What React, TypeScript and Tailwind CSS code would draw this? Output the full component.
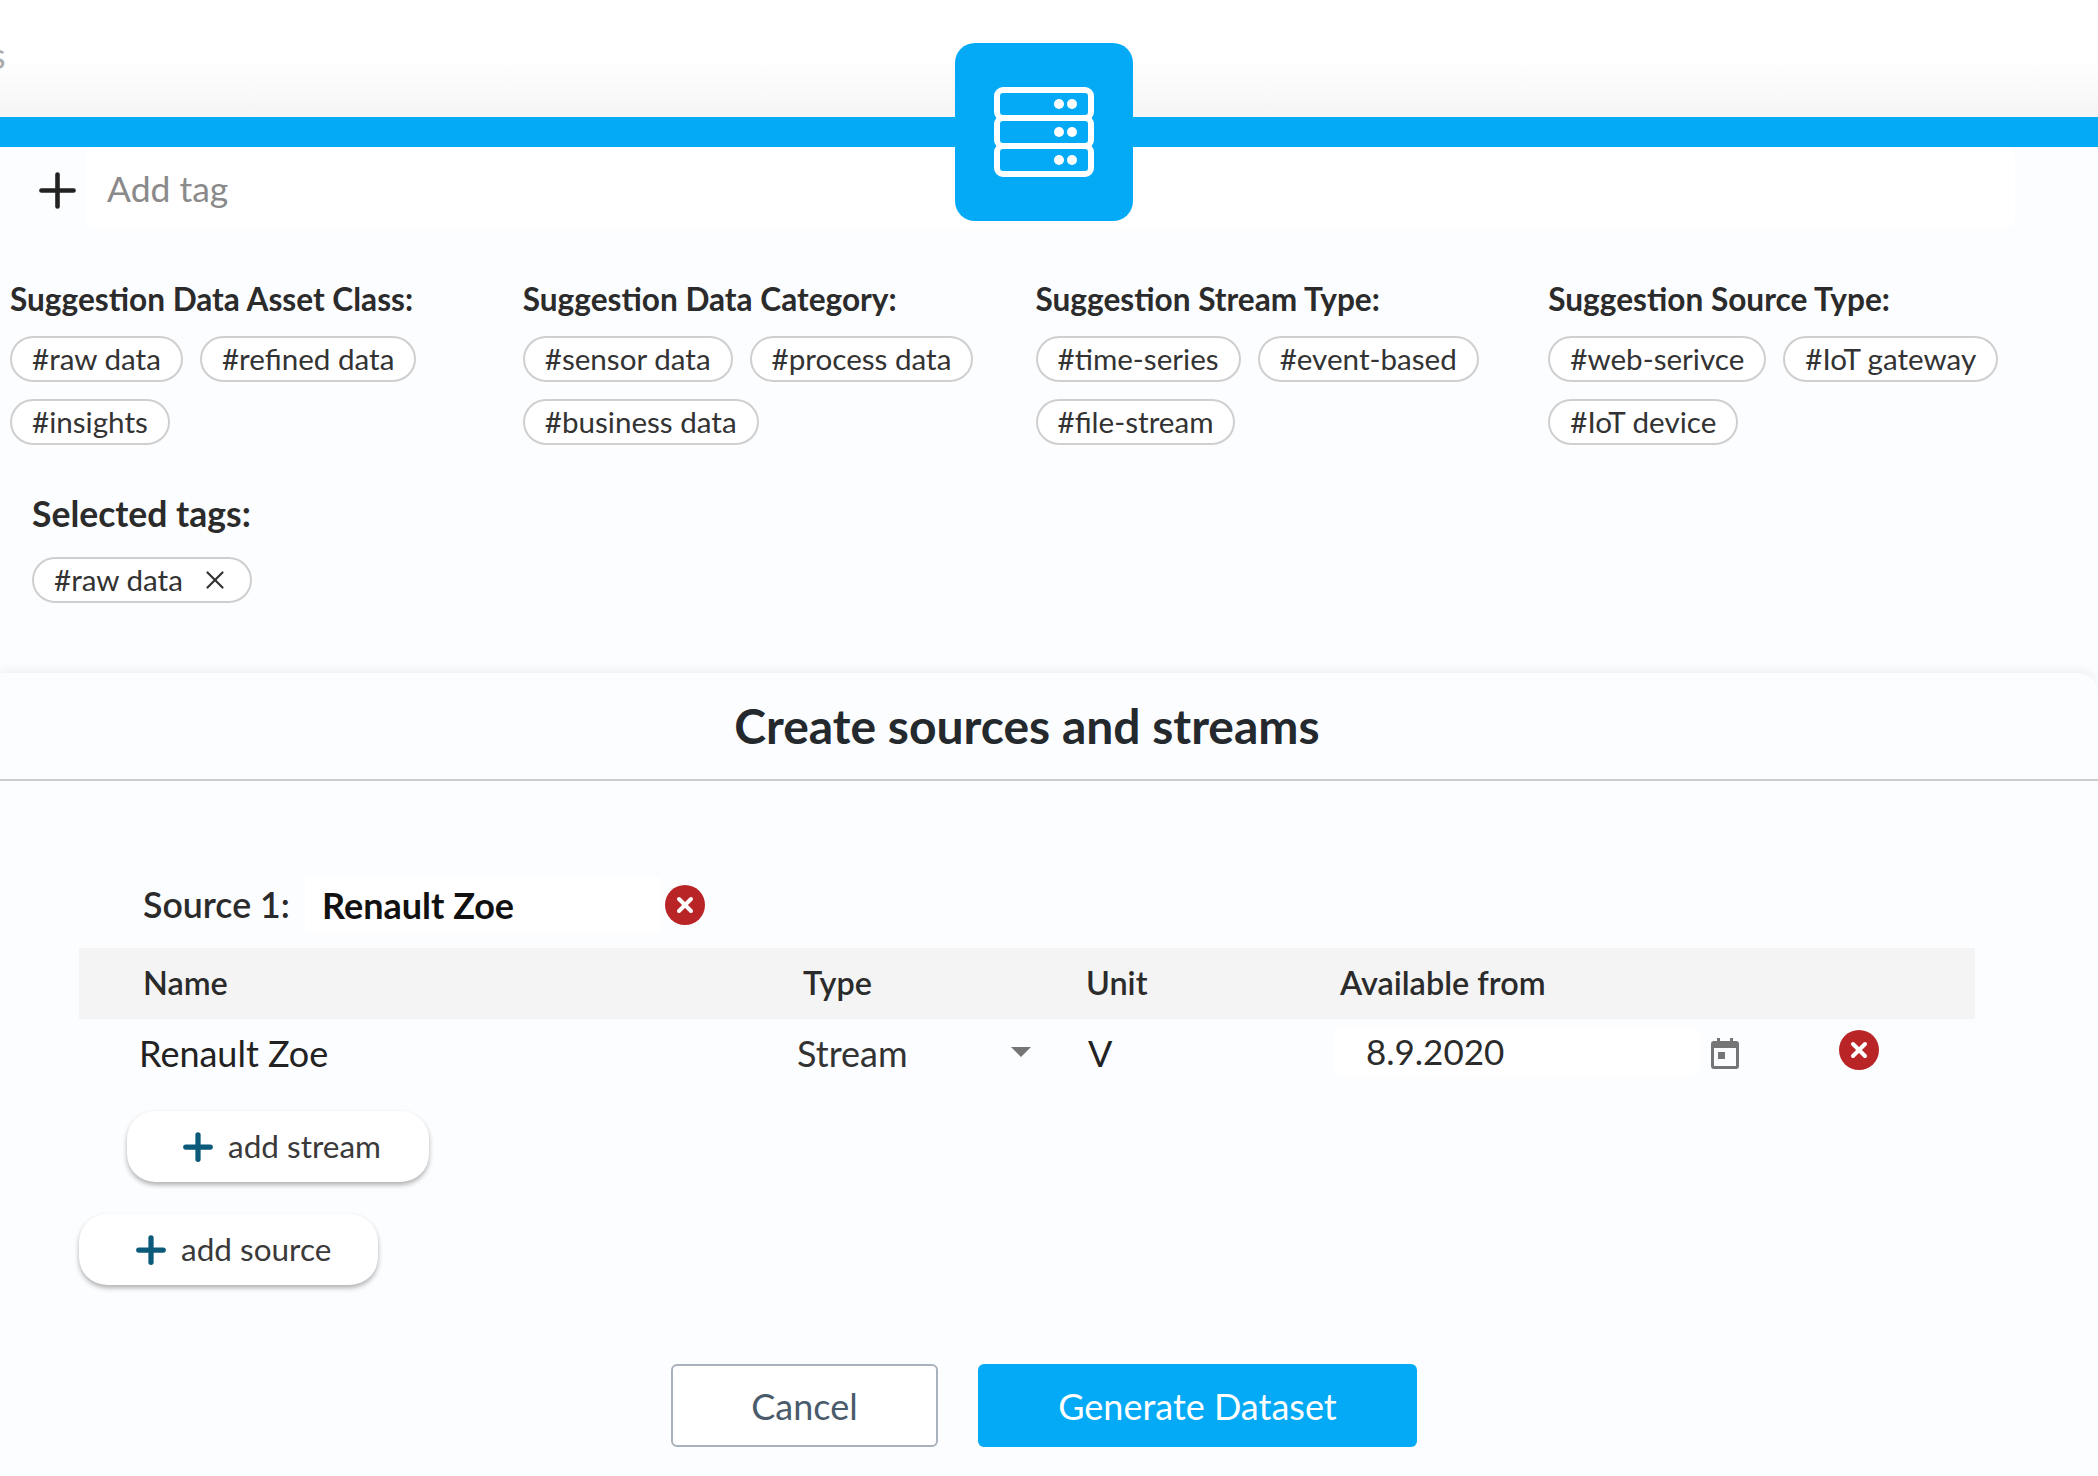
import { Plus, X } from 'lucide-react';

const font = { fontFamily: 'Lato, sans-serif' };

const columns = [
  { title: 'Suggestion Data Asset Class:', tags: ['#raw data', '#refined data', '#insights'] },
  { title: 'Suggestion Data Category:', tags: ['#sensor data', '#process data', '#business data'] },
  { title: 'Suggestion Stream Type:', tags: ['#time-series', '#event-based', '#file-stream'] },
  { title: 'Suggestion Source Type:', tags: ['#web-serivce', '#IoT gateway', '#IoT device'] },
];

const ServerIcon = () => (
  <svg width="100" height="90" viewBox="0 0 100 90" fill="none">
    <rect x="3" y="3" width="94" height="28" rx="6" stroke="white" strokeWidth="6" />
    <rect x="3" y="31" width="94" height="28" rx="6" stroke="white" strokeWidth="6" />
    <rect x="3" y="59" width="94" height="28" rx="6" stroke="white" strokeWidth="6" />
    {[17, 45, 73].map((y) => (
      <g key={y} fill="white">
        <circle cx="65" cy={y} r="5" />
        <circle cx="78" cy={y} r="5" />
      </g>
    ))}
  </svg>
);

const RemoveIcon = () => (
  <svg width="40" height="40" viewBox="0 0 40 40">
    <circle cx="20" cy="20" r="20" fill="#b92527" />
    <path d="M14 14l12 12M26 14L14 26" stroke="white" strokeWidth="4" strokeLinecap="round" />
  </svg>
);

const CalendarIcon = () => (
  <svg width="28" height="31" viewBox="0 0 28 31">
    <path d="M6 0h3v3h10V0h3v3h3a3 3 0 0 1 3 3v22a3 3 0 0 1-3 3H3a3 3 0 0 1-3-3V6a3 3 0 0 1 3-3h3z" fill="#757575" />
    <rect x="3" y="10" width="22" height="18" fill="#fcfdff" />
    <rect x="7" y="14" width="7" height="7" fill="#757575" />
  </svg>
);

const Chip = ({ label }: { label: string }) => (
  <span className="flex h-[46px] items-center rounded-full border-2 border-[#cfcfcf] bg-white px-[20px] text-[29.6px] text-[#333]">
    {label}
  </span>
);

const AddButton = ({ label, className }: { label: string; className: string }) => (
  <button className={`flex h-[71px] items-center rounded-[28px] bg-white text-[31.5px] text-[#3a3a3a] shadow-[0_3px_5px_rgba(0,0,0,0.3)] ${className}`}>
    <Plus size={42} strokeWidth={3} color="#0b5a7a" className="mr-[9px]" />
    {label}
  </button>
);

export default function App() {
  return (
    <div className="h-[1476px] w-[2098px] overflow-hidden bg-[#fcfdff]" style={font}>
      {/* Header strip */}
      <div className="relative">
        <div className="h-[117px] overflow-hidden bg-gradient-to-b from-white from-50% to-[#f5f5f5] pt-[35px] text-[36px] leading-[40px] text-[#aaa]">
          <span className="-ml-[10px] block">s</span>
        </div>
        <div className="h-[30px] bg-[#04aaf5]" />
        <div className="absolute left-[955px] top-[43px] flex h-[178px] w-[178px] items-center justify-center rounded-[20px] bg-[#04aaf5]">
          <ServerIcon />
        </div>
      </div>

      {/* Add tag */}
      <div className="flex h-[81px] items-center">
        <div className="mt-[6px] flex w-[85px] pl-[30px]">
          <Plus size={55} strokeWidth={2} color="#222" />
        </div>
        <div className="flex h-full w-[1930px] items-center rounded-[10px] bg-white pl-[22px] pt-[2px] text-[35.5px] text-[#8a8a8a]">
          Add tag
        </div>
      </div>

      {/* Suggestions */}
      <div className="grid w-[2061px] grid-cols-4 pl-[10px] pt-[51px]">
        {columns.map((col) => (
          <div key={col.title} className="w-[512px]">
            <h3 className="h-[40px] text-[31.6px] font-bold leading-[40px] text-[#2b2b2b]">{col.title}</h3>
            <div className="mt-[17px] flex w-[480px] flex-wrap gap-x-[17px] gap-y-[17px]">
              {col.tags.map((t) => (
                <Chip key={t} label={t} />
              ))}
            </div>
          </div>
        ))}
      </div>

      {/* Selected tags */}
      <div className="pl-[32px] pt-[49px]">
        <h3 className="h-[40px] text-[35.5px] font-bold leading-[40px] text-[#2b2b2b]">Selected tags:</h3>
        <div className="mt-[23px] flex">
          <span className="flex h-[46px] items-center rounded-full border-2 border-[#cfcfcf] bg-white pl-[20px] pr-[20px] text-[29.6px] text-[#333]">
            #raw data
            <X size={30} strokeWidth={1.75} color="#333" className="ml-[17px]" />
          </span>
        </div>
      </div>

      {/* Card */}
      <div className="mt-[70px] rounded-tr-[20px] bg-[#fcfdff] pb-[40px] shadow-[0_-4px_10px_rgba(0,0,0,0.05)]">
        <div className="flex h-[108px] items-center justify-center border-b-2 border-[#ccc] pr-[44px] text-[48px] font-bold text-[#24292e]">
          Create sources and streams
        </div>

        <div className="pl-[79px] pt-[96px]">
          <div className="flex h-[55px] items-center pl-[64px]">
            <span className="w-[162px] text-[35.7px] font-semibold text-[#2b2b2b]">Source 1:</span>
            <span className="flex h-full w-[355px] items-center bg-white pl-[17px] text-[36px] font-bold text-[#111]">Renault Zoe</span>
            <span className="ml-[5px]">
              <RemoveIcon />
            </span>
          </div>

          <div className="mt-[16px] grid h-[71px] w-[1896px] grid-cols-[724px_283px_254px_1fr] items-center bg-[#f4f4f4] text-[32.4px] font-semibold text-[#2b2b2b]">
            <span className="pl-[64px]">Name</span>
            <span>Type</span>
            <span>Unit</span>
            <span>Available from</span>
          </div>

          <div className="grid h-[68px] w-[1896px] grid-cols-[718px_291px_245px_1fr] items-center text-[36px] text-[#222]">
            <span className="pl-[60px]">Renault Zoe</span>
            <span className="flex items-center text-[#333]">
              <span className="w-[214px]">Stream</span>
              <span className="mb-[2px] h-0 w-0 border-x-[10px] border-t-[10px] border-x-transparent border-t-[#757575]" />
            </span>
            <span>V</span>
            <span className="flex items-center">
              <span className="mb-[4px] flex h-[50px] w-[367px] items-center rounded-[10px] bg-white pl-[33px] text-[35px] text-[#2b2b2b]">8.9.2020</span>
              <span className="ml-[11px] flex">
                <CalendarIcon />
              </span>
              <span className="mb-[6px] ml-[100px] flex">
                <RemoveIcon />
              </span>
            </span>
          </div>

          <AddButton label="add stream" className="ml-[48px] mt-[24px] w-[302px] pl-[50px]" />
          <AddButton label="add source" className="mt-[32px] w-[299px] pl-[51px]" />
        </div>

        <div className="flex pl-[671px] pt-[79px]">
          <button className="h-[83px] w-[267px] rounded-[6px] border-2 border-[#a9b2bc] bg-white text-[36px] text-[#4a5b6c]">Cancel</button>
          <button className="ml-[40px] h-[83px] w-[439px] rounded-[6px] bg-[#04aaf5] text-[36px] text-white">Generate Dataset</button>
        </div>
      </div>
    </div>
  );
}
